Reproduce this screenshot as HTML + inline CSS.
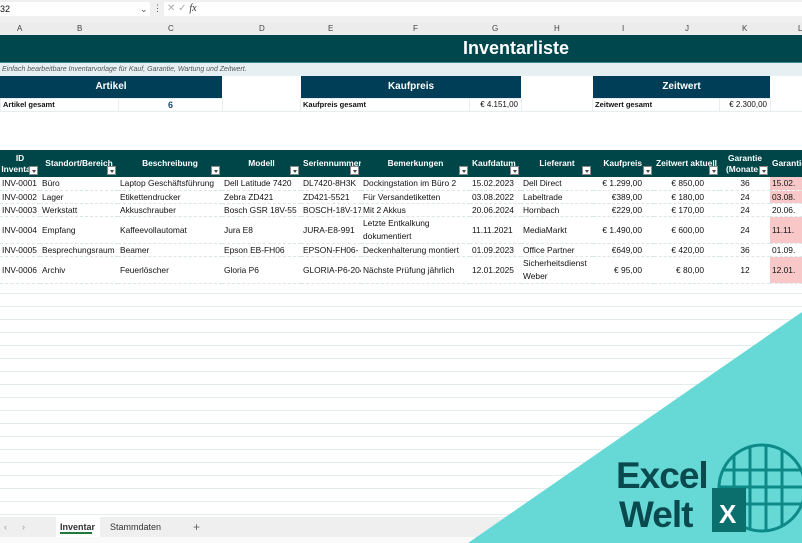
<!DOCTYPE html>
<html><head><meta charset="utf-8"><style>
*{margin:0;padding:0;box-sizing:border-box}
body{width:802px;height:543px;overflow:hidden;background:#fff;font-family:"Liberation Sans",sans-serif;font-size:9px;color:#111;position:relative}
.abs{position:absolute}
.grid{position:absolute;left:0;top:281px;width:802px;height:236px;background:repeating-linear-gradient(to bottom,transparent 0 12px,#e4ecec 12px 13px)}
table{border-collapse:collapse;position:absolute;left:0;table-layout:fixed;font-size:8.4px}
td{white-space:nowrap;overflow:hidden;padding:0 2px;vertical-align:middle}
.th td{background:#004548;color:#fff;font-weight:bold;text-align:center;line-height:11px;position:relative}
.dd{position:absolute;right:2px;bottom:2px;width:9px;height:9px;background:#fff;border:1px solid #888}
.dd:after{content:"";position:absolute;left:2px;top:3px;border:2px solid transparent;border-top:3px solid #444}
.body td{border-bottom:1px dashed #dde6e6;height:13px}
.r{text-align:right}.c{text-align:center}
.pink{background:#f8c8c8}
</style></head><body>
<div class="abs" style="left:0;top:0;width:802px;height:22px;background:#f0f0f0"></div>
<div class="abs" style="left:0;top:2px;width:150px;height:14px;background:#fff;font-size:9px;padding:2px 0 0 0">32<span style="position:absolute;left:140px;color:#555">⌄</span></div>
<div class="abs" style="left:153px;top:3px;color:#555">⋮</div>
<div class="abs" style="left:164px;top:2px;width:56px;height:14px;background:#fff;color:#aaa;padding:1px 3px;font-size:10px">✕ ✓ <i style="color:#333;font-family:'Liberation Serif'">fx</i></div>
<div class="abs" style="left:220px;top:2px;width:582px;height:14px;background:#fff"></div>
<div class="abs" style="left:0;top:22px;width:802px;height:13px;background:#ececec;color:#444;font-size:8px;line-height:13px">
<span class="abs" style="left:17px">A</span><span class="abs" style="left:77px">B</span><span class="abs" style="left:168px">C</span><span class="abs" style="left:259px">D</span><span class="abs" style="left:328px">E</span><span class="abs" style="left:413px">F</span><span class="abs" style="left:492px">G</span><span class="abs" style="left:554px">H</span><span class="abs" style="left:622px">I</span><span class="abs" style="left:685px">J</span><span class="abs" style="left:742px">K</span><span class="abs" style="left:798px">L</span></div>
<div class="abs" style="left:0;top:35px;width:802px;height:28px;background:#00474d;border-bottom:1px solid #3a8c8c"></div>
<div class="abs" style="left:463px;top:38px;color:#fff;font-size:18px;font-weight:bold">Inventarliste</div>
<div class="abs" style="left:0;top:63px;width:802px;height:13px;background:#e6f0f2;color:#555;font-style:italic;font-size:7px;line-height:13px;padding-left:2px">Einfach bearbeitbare Inventarvorlage für Kauf, Garantie, Wartung und Zeitwert.</div>
<div class="abs" style="left:0;top:76px;width:222px;height:22px;background:#003d57;color:#fff;font-weight:bold;font-size:10px;text-align:center;line-height:22px">Artikel</div>
<div class="abs" style="left:301px;top:76px;width:220px;height:22px;background:#003d57;color:#fff;font-weight:bold;font-size:10px;text-align:center;line-height:22px">Kaufpreis</div>
<div class="abs" style="left:593px;top:76px;width:177px;height:22px;background:#003d57;color:#fff;font-weight:bold;font-size:10px;text-align:center;line-height:22px">Zeitwert</div>
<div class="abs" style="left:0;top:98px;width:802px;height:14px;background:#e6eef0"></div>
<div class="abs" style="left:1px;top:99px;width:117px;height:12px;background:#fff;font-weight:bold;font-size:7.5px;line-height:12px;padding-left:2px">Artikel gesamt</div>
<div class="abs" style="left:119px;top:99px;width:103px;height:12px;background:#fff;font-weight:bold;color:#1a4c70;text-align:center;line-height:12px">6</div>
<div class="abs" style="left:223px;top:77px;width:77px;height:34px;background:#fff"></div>
<div class="abs" style="left:301px;top:99px;width:168px;height:12px;background:#fff;font-weight:bold;font-size:7.5px;line-height:12px;padding-left:2px">Kaufpreis gesamt</div>
<div class="abs" style="left:470px;top:99px;width:51px;height:12px;background:#fff;text-align:right;font-size:8px;line-height:12px;padding-right:3px">€ 4.151,00</div>
<div class="abs" style="left:522px;top:77px;width:70px;height:34px;background:#fff"></div>
<div class="abs" style="left:593px;top:99px;width:126px;height:12px;background:#fff;font-weight:bold;font-size:7.5px;line-height:12px;padding-left:2px">Zeitwert gesamt</div>
<div class="abs" style="left:720px;top:99px;width:50px;height:12px;background:#fff;text-align:right;font-size:8px;line-height:12px;padding-right:3px">€ 2.300,00</div>
<div class="abs" style="left:771px;top:77px;width:31px;height:34px;background:#fff"></div>
<div class="grid"></div>
<table style="top:150px;width:812px">
<colgroup><col style="width:40px"><col style="width:78px"><col style="width:104px"><col style="width:79px"><col style="width:60px"><col style="width:109px"><col style="width:51px"><col style="width:72px"><col style="width:61px"><col style="width:66px"><col style="width:50px"><col style="width:42px"></colgroup>
<tr class="th" style="height:27px"><td>ID<br><span style="margin-left:-8px">Inventa</span><i class="dd"></i></td><td>Standort/Bereich<i class="dd"></i></td><td>Beschreibung<i class="dd"></i></td><td>Modell<i class="dd"></i></td><td style="text-align:left">Seriennummer<i class="dd"></i></td><td>Bemerkungen<i class="dd"></i></td><td style="text-align:left">Kaufdatum<i class="dd"></i></td><td>Lieferant<i class="dd"></i></td><td style="text-align:right;padding-right:12px">Kaufpreis<i class="dd"></i></td><td style="text-align:left">Zeitwert aktuell<i class="dd"></i></td><td>Garantie<br><span style="margin-left:-6px">(Monate</span><i class="dd"></i></td><td style="text-align:left">Garantie</td></tr>
<tbody class="body">
<tr><td>INV-0001</td><td>Büro</td><td>Laptop Geschäftsführung</td><td>Dell Latitude 7420</td><td>DL7420-8H3K</td><td>Dockingstation im Büro 2</td><td>15.02.2023</td><td>Dell Direct</td><td class="r" style="padding-right:12px">€ 1.299,00</td><td class="r" style="padding-right:16px">€ 850,00</td><td class="c">36</td><td class="pink">15.02.</td></tr>
<tr><td>INV-0002</td><td>Lager</td><td>Etikettendrucker</td><td>Zebra ZD421</td><td>ZD421-5521</td><td>Für Versandetiketten</td><td>03.08.2022</td><td>Labeltrade</td><td class="r" style="padding-right:12px">€389,00</td><td class="r" style="padding-right:16px">€ 180,00</td><td class="c">24</td><td class="pink">03.08.</td></tr>
<tr><td>INV-0003</td><td>Werkstatt</td><td>Akkuschrauber</td><td>Bosch GSR 18V-55</td><td>BOSCH-18V-17</td><td>Mit 2 Akkus</td><td>20.06.2024</td><td>Hornbach</td><td class="r" style="padding-right:12px">€229,00</td><td class="r" style="padding-right:16px">€ 170,00</td><td class="c">24</td><td>20.06.</td></tr>
<tr style="height:26px"><td>INV-0004</td><td>Empfang</td><td>Kaffeevollautomat</td><td>Jura E8</td><td>JURA-E8-991</td><td style="line-height:13px">Letzte Entkalkung<br>dokumentiert</td><td>11.11.2021</td><td>MediaMarkt</td><td class="r" style="padding-right:12px">€ 1.490,00</td><td class="r" style="padding-right:16px">€ 600,00</td><td class="c">24</td><td class="pink">11.11.</td></tr>
<tr><td>INV-0005</td><td>Besprechungsraum</td><td>Beamer</td><td>Epson EB-FH06</td><td>EPSON-FH06-</td><td>Deckenhalterung montiert</td><td>01.09.2023</td><td>Office Partner</td><td class="r" style="padding-right:12px">€649,00</td><td class="r" style="padding-right:16px">€ 420,00</td><td class="c">36</td><td>01.09.</td></tr>
<tr style="height:26px"><td>INV-0006</td><td>Archiv</td><td>Feuerlöscher</td><td>Gloria P6</td><td>GLORIA-P6-204</td><td>Nächste Prüfung jährlich</td><td>12.01.2025</td><td style="line-height:13px">Sicherheitsdienst<br>Weber</td><td class="r" style="padding-right:12px">€ 95,00</td><td class="r" style="padding-right:16px">€ 80,00</td><td class="c">12</td><td class="pink">12.01.</td></tr>
</tbody></table>
<div class="abs" style="left:0;top:517px;width:802px;height:20px;background:#efefef;font-size:9px;line-height:20px;color:#333">
<span class="abs" style="left:4px;color:#999">‹</span><span class="abs" style="left:22px;color:#999">›</span>
<span class="abs" style="left:56px;top:0;width:44px;height:20px;background:#fff;font-weight:bold;padding-left:4px">Inventar<span class="abs" style="left:4px;top:15px;width:32px;height:2px;background:#1e7a3c"></span></span>
<span class="abs" style="left:110px">Stammdaten</span><span class="abs" style="left:193px;font-size:12px;color:#666">+</span></div>
<div class="abs" style="left:0;top:537px;width:802px;height:6px;background:#fafafa"></div>
<svg class="abs" style="left:0;top:0" width="802" height="543">
<polygon points="802,312 802,543 468,543" fill="#66d9d7"/>
<g fill="none" stroke="#0d8a88" stroke-width="3">
<circle cx="762" cy="488" r="43"/>
<line x1="734" y1="455" x2="734" y2="521"/><line x1="750" y1="447" x2="750" y2="530"/><line x1="766" y1="445" x2="766" y2="531"/><line x1="782" y1="450" x2="782" y2="526"/>
<line x1="722" y1="470" x2="802" y2="470"/><line x1="719" y1="487" x2="805" y2="487"/><line x1="722" y1="504" x2="802" y2="504"/>
</g>
<rect x="712" y="488" width="34" height="44" fill="#0b6f6e"/>
<text x="719" y="523" fill="#fff" font-family="Liberation Sans" font-weight="bold" font-size="26">X</text>
<text x="616" y="488" fill="#0a4a4f" font-family="Liberation Sans" font-weight="bold" font-size="37" letter-spacing="-1">Excel</text>
<text x="619" y="527" fill="#0a4a4f" font-family="Liberation Sans" font-weight="bold" font-size="37" letter-spacing="-1">Welt</text>
</svg>
</body></html>
